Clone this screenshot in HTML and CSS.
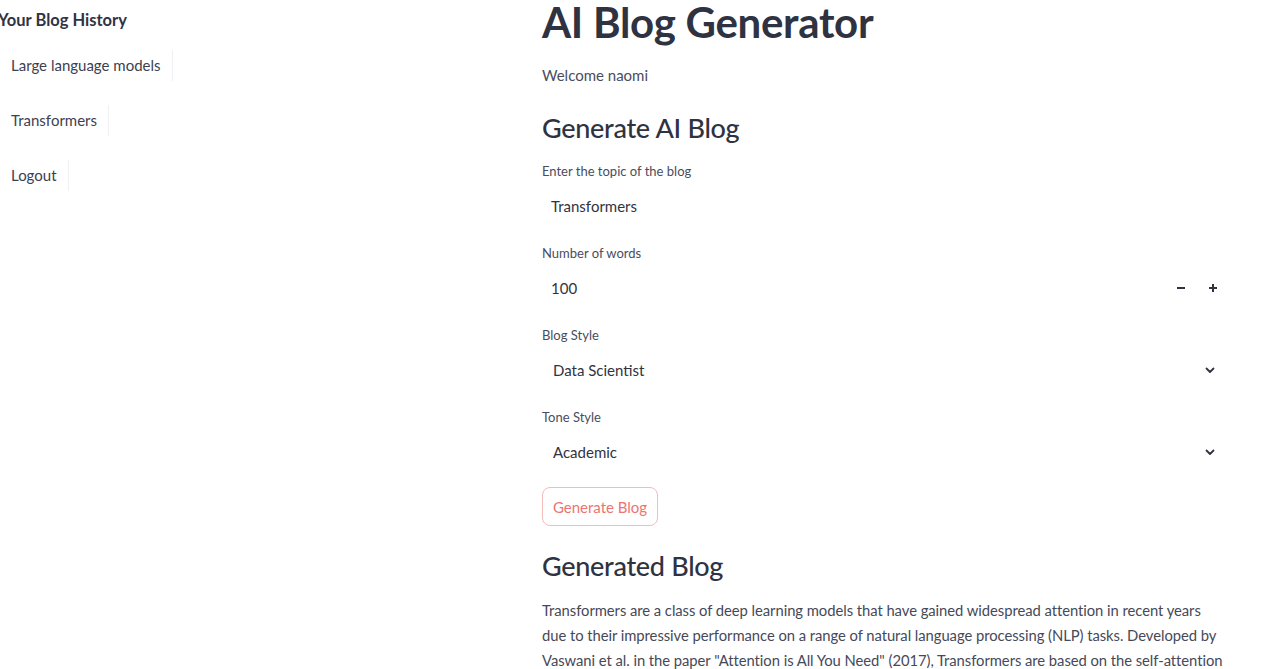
FILE: index.html
```html
<!DOCTYPE html>
<html>
<head>
<meta charset="utf-8">
<link rel="stylesheet" href="styles.css">
</head>
<body>
<div class="app">
  <aside class="sidebar">
    <h3 class="side-title">Your Blog History</h3>
    <div class="side-list">
      <button class="side-btn">Large language models</button>
      <button class="side-btn">Transformers</button>
      <button class="side-btn">Logout</button>
    </div>
  </aside>
  <main class="main">
    <h1 class="title">AI Blog Generator</h1>
    <p class="welcome">Welcome naomi</p>
    <h2 class="h2 gen">Generate AI Blog</h2>
    <div class="field">
      <label class="label">Enter the topic of the blog</label>
      <div class="input"><span>Transformers</span></div>
    </div>
    <div class="field">
      <label class="label">Number of words</label>
      <div class="input"><span>100</span>
        <div class="steps">
          <svg width="12" height="12" viewBox="0 0 12 12"><path d="M2 6h8" stroke="#31333f" stroke-width="2"/></svg>
          <svg width="12" height="12" viewBox="0 0 12 12"><path d="M2 6h8M6 2v8" stroke="#31333f" stroke-width="2"/></svg>
        </div>
      </div>
    </div>
    <div class="field">
      <label class="label">Blog Style</label>
      <div class="input sel"><span>Data Scientist</span>
        <svg class="chev" width="12" height="12" viewBox="0 0 12 12"><path d="M2.5 4.5L6 8l3.5-3.5" fill="none" stroke="#31333f" stroke-width="1.8" stroke-linecap="round" stroke-linejoin="round"/></svg>
      </div>
    </div>
    <div class="field">
      <label class="label">Tone Style</label>
      <div class="input sel"><span>Academic</span>
        <svg class="chev" width="12" height="12" viewBox="0 0 12 12"><path d="M2.5 4.5L6 8l3.5-3.5" fill="none" stroke="#31333f" stroke-width="1.8" stroke-linecap="round" stroke-linejoin="round"/></svg>
      </div>
    </div>
    <button class="gen-btn">Generate Blog</button>
    <h2 class="h2 out">Generated Blog</h2>
    <p class="para">Transformers are a class of deep learning models that have gained widespread attention in recent years due to their impressive performance on a range of natural language processing (NLP) tasks. Developed by Vaswani et al. in the paper "Attention is All You Need" (2017), Transformers are based on the self-attention mechanism, which allows them to weigh the importance of different words in a sentence.</p>
  </main>
</div>
</body>
</html>
```
FILE: styles.css
```css
* { box-sizing: border-box; }
html, body { margin: 0; padding: 0; background: #fff; height: 669px; overflow: hidden; }
body { font-family: "Lato", "Noto Sans", sans-serif; color: #31333f; }
.app { display: flex; }
.sidebar { width: 544px; flex-shrink: 0; margin-left: -2px; }
.side-title { margin: 8px 0 0; font-size: 16.5px; font-weight: 700; color: #31333f; line-height: 24px; }
.side-list { display: flex; flex-direction: column; align-items: flex-start; gap: 24px; margin-top: 18px; }
.side-btn { font-family: inherit; font-size: 15px; color: #3d4050; background: #fff; border: none; border-right: 1px solid #f0f0f2; padding: 0 11px 0 13px; height: 31px; line-height: 31px; }
.main { width: 684px; display: flex; flex-direction: column; align-items: stretch; }
.title { margin: 0; font-size: 42px; font-weight: 700; line-height: 44px; height: 44px; letter-spacing: -0.3px; color: #2f3341; }
.welcome { margin: 19px 0 0; font-size: 15px; line-height: 24px; color: #4a4d5c; }
.h2 { margin: 0; font-weight: 500; font-size: 27px; line-height: 36px; color: #2f3341; letter-spacing: -0.3px; }
.gen { margin-top: 23px; }
.field { display: flex; flex-direction: column; }
.label { font-size: 13px; line-height: 20px; color: #4a4d5c; }
.gen + .field { margin-top: 15px; }
.field + .field { margin-top: 17px; }
.input { height: 40px; margin-top: 5px; display: flex; align-items: center; padding-left: 9px; font-size: 15px; color: #31333f; }
.input span { flex: 1; }
.sel { padding-left: 11px; }
.steps { display: flex; gap: 20px; margin-right: 7px; }
.chev { margin-right: 10px; }
.gen-btn { align-self: flex-start; margin-top: 15px; font-family: inherit; font-size: 15px; color: #ec7472; background: #fff; border: 1px solid #f3bcba; border-radius: 8px; height: 39px; width: 116px; padding: 0; }
.out { margin-top: 22px; }
.para { margin: 14px 0 0; font-size: 14.8px; line-height: 25px; color: #464958; letter-spacing: -0.05px; }
```
